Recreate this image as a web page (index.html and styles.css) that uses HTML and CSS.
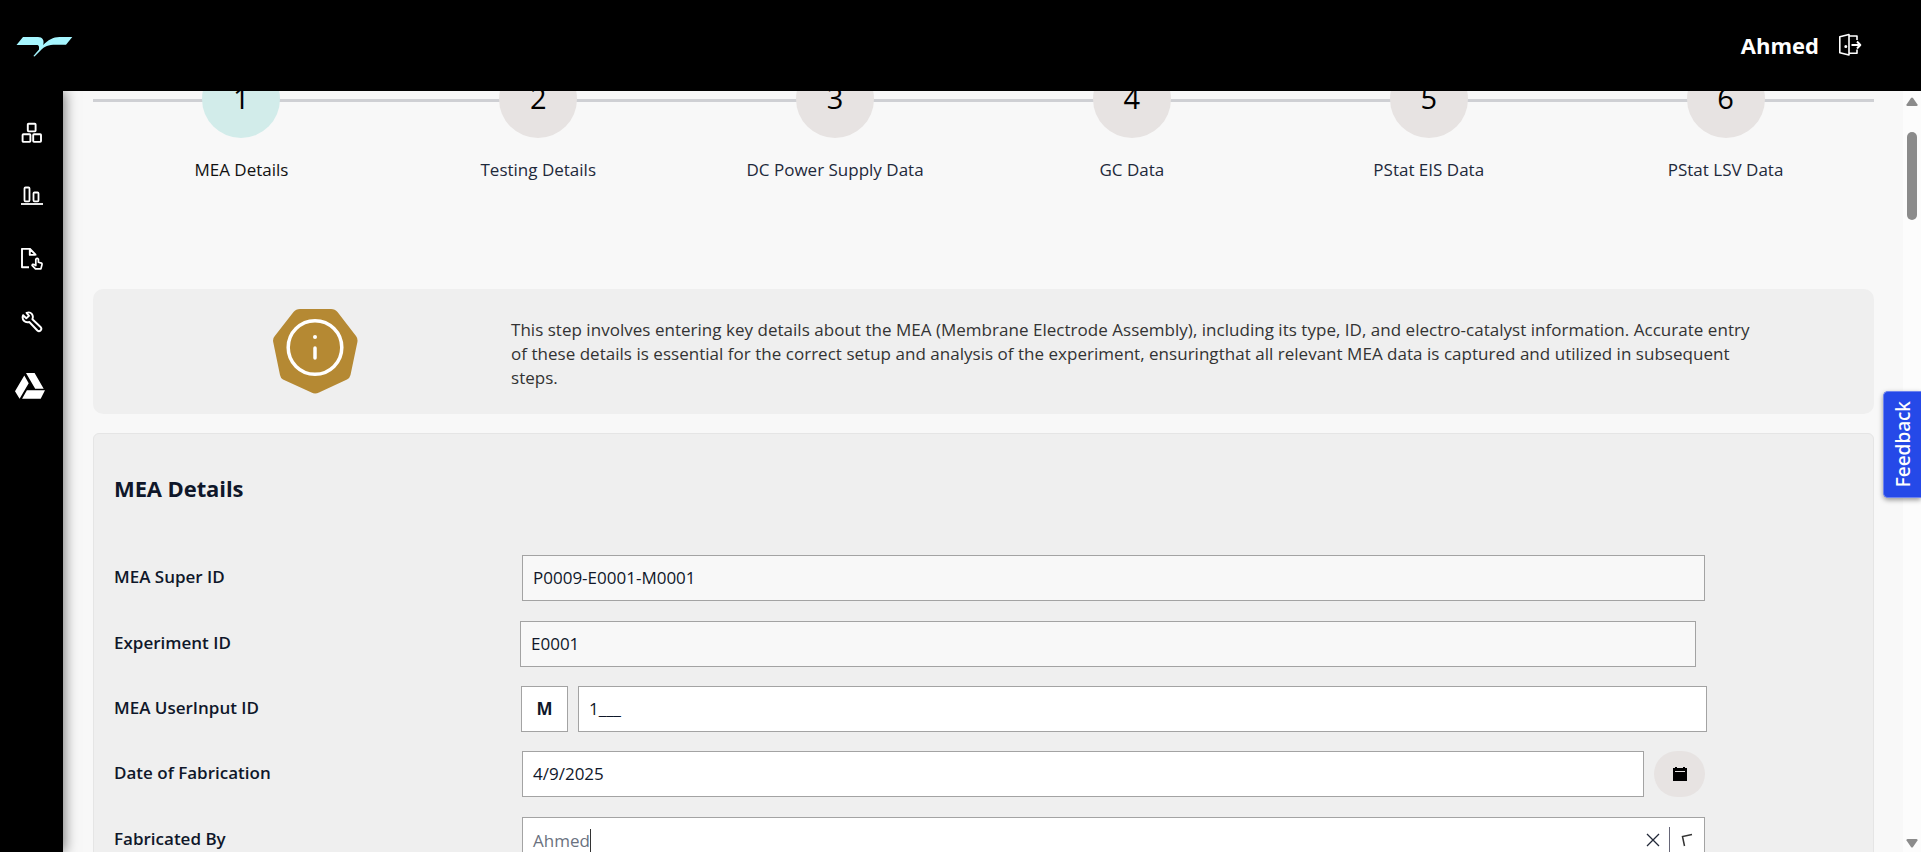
FILE: index.html
```html
<!DOCTYPE html>
<html lang="en">
<head>
<meta charset="utf-8">
<title>MEA Details</title>
<link rel="stylesheet" href="styles.css">
</head>
<body>
<header class="topbar">
  <svg class="logo" width="58" height="22" viewBox="0 0 58 22"><path fill="#a6f6ff" d="M7 1H22C26.500 1 28.500 4 27.200 9C32 4 37 1 43.500 1H56.300L50 8.800H40C32 8.800 28.500 10.500 25.500 13.500L18.500 20.600L17.400 20L23 13.600V11C22.900 9.500 22.200 8.900 20.500 8.900H.5Z"/></svg>
  <div class="user">
    <span class="user-name">Ahmed</span>
    <svg width="24" height="24" viewBox="0 0 24 24" fill="none" stroke="#fff" stroke-width="1.600" stroke-linejoin="round"><path d="M1.800 3.800 11 1.500V22L1.800 19.800ZM11 3H19V7M11 20.200H19V16.500"/><path stroke-width="2" d="M13.500 12H22M19 8.500 22.300 12 19 15.500"/><circle cx="7.800" cy="13.500" r=".7" fill="#fff"/></svg>
  </div>
</header>
<div class="body">
  <nav class="sidebar">
    <svg width="22" height="22" viewBox="0 0 22 22" fill="none" stroke="#fff" stroke-width="1.900"><rect x="6.800" y="1.800" width="7.800" height="7.600" rx=".8"/><rect x="1.600" y="12.300" width="7.800" height="7.600" rx=".8"/><rect x="12.200" y="12.300" width="7.800" height="7.600" rx=".8"/></svg>
    <svg width="22" height="22" viewBox="0 0 22 22" fill="none" stroke="#fff" stroke-width="1.800"><path d="M0 19H22"/><rect x="3.500" y="2.500" width="5" height="13.800" rx="1"/><rect x="12.500" y="7.500" width="5" height="8.800" rx="1"/></svg>
    <svg width="22" height="22" viewBox="0 0 22 22" fill="none" stroke="#fff" stroke-width="1.900" stroke-linejoin="round"><path d="M8 19.300H1V.9H9L14.500 6.700V7.500M8.800 1V6.900H14.500"/><path stroke-width="1.700" d="M14.800 15.500V11.200Q16.200 9.600 17.400 11.200V14.200L20.500 15.100Q21.300 15.500 20.900 17L19.900 20.900H14.500L11.100 17.400Q11.500 15.800 13 16.600L14.800 17.600Z"/></svg>
    <svg width="22" height="22" viewBox="0 0 22 22" fill="none" stroke="#fff" stroke-width="1.900" stroke-linejoin="round"><path d="M2.100 4.200 5.300 7.300 8 4.900 5.600 1.800C10 .1 13 4 11.400 8.200L19.800 16.300C21.500 18.500 18.500 21.400 16.400 19.500L8.300 11C4 12.300.3 8.700 2.100 4.200Z"/></svg>
    <svg class="drive" width="32" height="28" viewBox="0 0 32 28" fill="#fff"><path d="M12 1H20.600L29.700 16.800H21.200ZM10.300 3.500 14.700 11.200 5.600 26.700 1 19.200ZM12.900 18.300H31L26.700 26.700H8.100Z"/></svg>
  </nav>
  <main class="content">
    <ol class="steps">
      <li class="step"><span class="dot active">1</span><span class="step-label current">MEA Details</span></li>
      <li class="step"><span class="dot">2</span><span class="step-label">Testing Details</span></li>
      <li class="step"><span class="dot">3</span><span class="step-label">DC Power Supply Data</span></li>
      <li class="step"><span class="dot">4</span><span class="step-label">GC Data</span></li>
      <li class="step"><span class="dot">5</span><span class="step-label">PStat EIS Data</span></li>
      <li class="step"><span class="dot">6</span><span class="step-label">PStat LSV Data</span></li>
    </ol>
    <section class="info">
      <svg class="info-icon" width="86" height="86" viewBox="0 0 86 86"><path fill="#b58933" d="M28 1H59Q63 1 65.500 4L84 28Q86 30.500 85.400 34L78.500 67Q77.800 70 75 71.500L47 84.500Q43 86.500 39.500 84.500L11 71.500Q8.500 70 8 67L1.200 34Q.5 30.500 2.800 28L21.500 4Q24 1 28 1Z"/><circle cx="43" cy="39.500" r="26.800" fill="none" stroke="#fff" stroke-width="3.500"/><circle cx="43" cy="29" r="2" fill="#fff"/><path d="M43 40V50" stroke="#fff" stroke-width="3.500" stroke-linecap="round"/></svg>
      <p class="info-text">This step involves entering key details about the MEA (Membrane Electrode Assembly), including its type, ID, and electro-catalyst information. Accurate entry<br>of these details is essential for the correct setup and analysis of the experiment, ensuringthat all relevant MEA data is captured and utilized in subsequent<br>steps.</p>
    </section>
    <section class="card">
      <h2 class="card-title">MEA Details</h2>
      <div class="row row-super"><label class="label">MEA Super ID</label><div class="field readonly">P0009-E0001-M0001</div></div>
      <div class="row row-experiment"><label class="label">Experiment ID</label><div class="field readonly">E0001</div></div>
      <div class="row row-input"><label class="label">MEA UserInput ID</label><div class="prefix">M</div><div class="field">1___</div></div>
      <div class="row row-date"><label class="label">Date of Fabrication</label><div class="field">4/9/2025</div>
        <div class="calendar"><svg width="14" height="14" viewBox="0 0 14 14"><path d="M0 1H2V0H4V1H10V0H12V1H14V14H0Z"/><path fill="#e7e3e2" d="M2 4H12V5H2Z"/></svg></div></div>
      <div class="row row-by"><label class="label">Fabricated By</label><div class="field select"><span class="typed">Ahmed</span>
        <svg class="clear" width="14" height="14" viewBox="0 0 14 14" fill="none" stroke="#222838" stroke-width="1.300"><path d="M1 1 13 13M13 1 1 13"/></svg><span class="divider"></span>
        <svg class="chevron" width="12" height="14" viewBox="0 0 12 14" fill="none" stroke="#333" stroke-width="1.500"><path d="M11 1.500 1.500 3.500 3.500 13"/></svg></div></div>
    </section>
  </main>
  <div class="scrollbar">
    <svg width="12" height="10" viewBox="0 0 12 10"><path fill="#8b8b8b" d="M5 1Q6 0 7 1L11.500 7.500Q12 9 10.500 9H1.500Q0 9 .5 7.500Z"/></svg>
    <div class="thumb"></div>
    <svg class="down" width="12" height="10" viewBox="0 0 12 10"><path fill="#8b8b8b" d="M5 9Q6 10 7 9L11.500 2.500Q12 1 10.500 1H1.500Q0 1 .5 2.500Z"/></svg>
  </div>
</div>
<div class="feedback"><span class="feedback-text">Feedback</span></div>
</body>
</html>
```
FILE: styles.css
```css
* { box-sizing: border-box; }
body { margin: 0; height: 852px; overflow: hidden; display: flex; flex-direction: column; font: 17px "Open Sans", "Noto Sans", sans-serif; color: #0f172a; background: #f8f8f8; }
.topbar { height: 91px; flex: none; background: #000; display: flex; align-items: center; justify-content: space-between; padding: 0 59px 0 16px; z-index: 2; }
.logo { margin-top: 3px; }
.user { display: flex; align-items: center; gap: 19px; color: #fff; margin-top: -2px; }
.user-name { font-size: 22px; font-weight: 700; }
.body { flex: 1; min-height: 0; display: flex; }
.sidebar { width: 63px; flex: none; background: #000; padding-top: 31px; display: flex; flex-direction: column; align-items: center; gap: 41px; box-shadow: 2px 0 12px rgba(0,0,0,.5); z-index: 1; }
.drive { margin: -2px 4px 0 0; }
.content { flex: 1; min-width: 0; padding: 0 29px 0 30px; overflow: hidden; }
.steps { list-style: none; margin: -31px 0 0; padding: 0; display: flex; background: linear-gradient(#cfd0d4, #cfd0d4) 0 39px / 100% 3px no-repeat; }
.step { flex: 1; display: flex; flex-direction: column; align-items: center; }
.dot { width: 78px; height: 78px; border-radius: 50%; background: #e7e3e2; color: #000; font-size: 29px; line-height: 36px; padding-bottom: 2px; display: flex; align-items: center; justify-content: center; }
.dot.active { background: #d2ecea; }
.step-label { margin-top: 20px; line-height: 24px; color: #1e293b; }
.step-label.current { color: #111; }
.info { height: 125px; margin-top: 107px; border-radius: 10px; background: #efefef; display: flex; }
.info-icon { margin: 19px 0 0 179px; flex: none; }
.info-text { margin: 29px 0 0 153px; line-height: 24px; letter-spacing: .025px; color: #333; white-space: nowrap; }
.card { margin-top: 19px; height: 500px; border: 1px solid #e5e5e5; border-radius: 6px; background: #efefef; padding: 37px 0 0 20px; }
.card-title { margin: 0 0 50px; font-size: 22px; font-weight: 700; line-height: 34px; letter-spacing: -.1px; }
.row { display: flex; height: 46px; margin-bottom: 19px; }
.label { width: 408px; flex: none; font-weight: 600; line-height: 43px; }
.field { border: 1px solid #a3a3a3; background: #fff; padding: 0 10px; line-height: 44px; flex: 1; }
.readonly { background: #f8f8f8; }
.row-super, .row-by, .row-date { width: 1591px; }
.row-super, .row-date { margin-bottom: 20px; }
.row-experiment { width: 1582px; }
.row-experiment .label { width: 406px; }
.row-input { width: 1593px; }
.row-input .label { width: 407px; }
.prefix { width: 47px; margin-right: 10px; border: 1px solid #a3a3a3; background: #fff; font-weight: 700; line-height: 44px; text-align: center; }
.calendar { width: 51px; margin-left: 10px; border-radius: 23px; background: #e7e3e2; display: flex; align-items: center; justify-content: center; }
.select { display: flex; align-items: center; }
.typed { color: #6b7280; border-right: 1px solid #333; line-height: 23px; margin-right: auto; }
.divider { width: 1px; height: 26px; background: #667; margin: 0 11px 0 9px; }
.chevron { margin-right: 1px; }
.scrollbar { width: 18px; flex: none; background: #fcfcfc; padding-top: 6px; display: flex; flex-direction: column; align-items: center; }
.thumb { width: 10px; height: 88px; margin-top: 25px; border-radius: 5px; background: #8b8b8b; }
.down { margin-top: auto; margin-bottom: 4px; }
.feedback { position: absolute; z-index: 3; right: 0; top: 391px; width: 38px; height: 107px; border: 1px solid #6d83ee; border-right: 0; border-radius: 5px 0 0 5px; background: #2549e8; color: #fff; display: flex; align-items: center; justify-content: center; box-shadow: 0 2px 5px rgba(0,0,0,.4); }
.feedback-text { writing-mode: vertical-rl; transform: rotate(180deg); font: 500 19px "Noto Sans", sans-serif; }
```
